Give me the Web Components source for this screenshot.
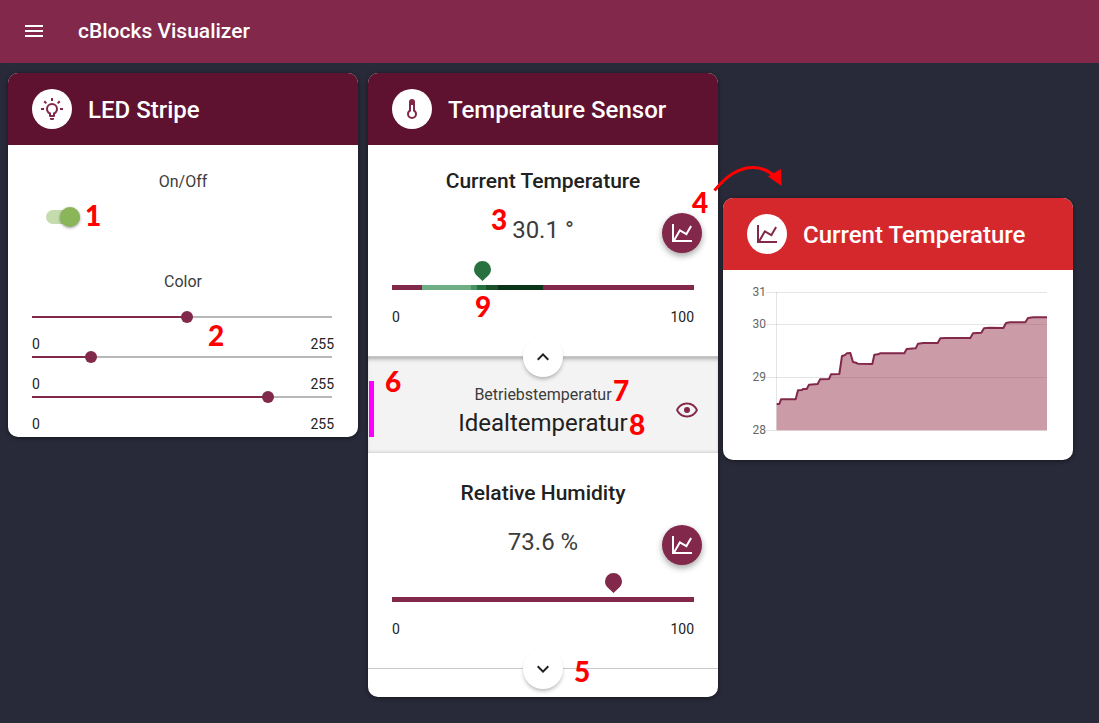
<!DOCTYPE html>
<html lang="en">
<head>
<meta charset="utf-8">
<meta name="viewport" content="width=device-width, initial-scale=1">
<title>cBlocks Visualizer</title>
<style>
  :root { --primary: #82284b; --primary-dark: #5e122f; --ink: #212121; --ink-soft: #3c3c3c; }
  body { margin: 0; min-height: 100vh; background: #292a39; color: var(--ink); font: 16px/24px Roboto, sans-serif; }
</style>
</head>
<body>
<cb-app>
  <cb-card slot="led" heading="LED Stripe" icon="bulb">
    <cb-led></cb-led>
    <cb-mark style="left:77px;top:128px">1</cb-mark>
    <cb-mark style="left:200px;top:248px">2</cb-mark>
  </cb-card>
  <cb-card slot="sensor" heading="Temperature Sensor" icon="thermometer">
    <cb-gauge heading="Current Temperature" value="30.1" unit="°" zones expanded></cb-gauge>
    <cb-state category="Betriebstemperatur" name="Idealtemperatur"></cb-state>
    <cb-gauge heading="Relative Humidity" value="73.6" unit="%"></cb-gauge>
    <cb-mark style="left:123px;top:132px">3</cb-mark>
    <cb-mark style="left:324px;top:115px">4</cb-mark>
    <cb-mark style="left:206px;top:584px">5</cb-mark>
    <cb-mark style="left:17px;top:294px">6</cb-mark>
    <cb-mark style="left:245px;top:303px">7</cb-mark>
    <cb-mark style="left:261px;top:337px">8</cb-mark>
    <cb-mark style="left:107px;top:219px">9</cb-mark>
    <cb-arrow style="left:345px;top:92px"></cb-arrow>
  </cb-card>
  <cb-card slot="chart" heading="Current Temperature" icon="chart" style="--head:#d5282c">
    <cb-chart></cb-chart>
  </cb-card>
</cb-app>

<script>
const ICONS = {
  menu: 'M3,6H21V8H3V6M3,11H21V13H3V11M3,16H21V18H3V16Z',
  bulb: 'M20,11H23V13H20V11M1,11H4V13H1V11M13,1V4H11V1H13M4.92,3.5L7.05,5.64L5.63,7.05L3.5,4.93L4.92,3.5M16.95,5.63L19.07,3.5L20.5,4.93L18.37,7.05L16.95,5.63M12,6A6,6 0 0,1 18,12C18,14.22 16.79,16.16 15,17.2V19A1,1 0 0,1 14,20H10A1,1 0 0,1 9,19V17.2C7.21,16.16 6,14.22 6,12A6,6 0 0,1 12,6M14,21V22A1,1 0 0,1 13,23H11A1,1 0 0,1 10,22V21H14M11,18H13V15.87C14.73,15.43 16,13.86 16,12A4,4 0 0,0 12,8A4,4 0 0,0 8,12C8,13.86 9.27,15.43 11,15.87V18Z',
  thermometer: 'M17,17A5,5 0 0,1 12,22A5,5 0 0,1 7,17C7,15.36 7.79,13.91 9,13V5A3,3 0 0,1 12,2A3,3 0 0,1 15,5V13C16.21,13.91 17,15.36 17,17M11,8V14.17C9.83,14.58 9,15.69 9,17A3,3 0 0,0 12,20A3,3 0 0,0 15,17C15,15.69 14.17,14.58 13,14.17V8H11Z',
  chart: 'M16,11.78L20.24,4.45L21.97,5.45L16.74,14.5L10.23,10.75L5.46,19H22V21H2V3H4V17.54L9.5,8L16,11.78Z',
  up: 'M7.41,15.41L12,10.83L16.59,15.41L18,14L12,8L6,14L7.41,15.41Z',
  down: 'M7.41,8.59L12,13.17L16.59,8.59L18,10L12,16L6,10L7.41,8.59Z',
  eye: 'M12,9A3,3 0 0,1 15,12A3,3 0 0,1 12,15A3,3 0 0,1 9,12A3,3 0 0,1 12,9M12,4.5C17,4.5 21.27,7.61 23,12C21.27,16.39 17,19.5 12,19.5C7,19.5 2.73,16.39 1,12C2.73,7.61 7,4.5 12,4.5M3.18,12C4.83,15.36 8.24,17.5 12,17.5C15.76,17.5 19.17,15.36 20.82,12C19.17,8.64 15.76,6.5 12,6.5C8.24,6.5 4.83,8.64 3.18,12Z'
};
const define = (name, render, init) => customElements.define(name, class extends HTMLElement {
  connectedCallback() {
    if (this.shadowRoot) return;
    const root = this.attachShadow({ mode: 'open' });
    root.innerHTML = '<style>*{box-sizing:border-box}button{font:inherit;border:0;padding:0;cursor:pointer}</style>' + render(this);
    if (init) init(root, this);
  }
});

define('cb-icon', el => `
  <style>:host{display:block;width:24px;height:24px}svg{display:block}</style>
  <svg width="24" height="24" viewBox="0 0 24 24" fill="currentColor" aria-hidden="true"><path d="${ICONS[el.getAttribute('name')]}"/></svg>`);

define('cb-app', () => `
  <style>
    :host{display:block}
    header{display:flex;align-items:center;gap:32px;padding:19px 22px 20px;background:var(--primary);color:#fff}
    header button{background:none;color:inherit}
    h1{margin:0;font-size:21px;line-height:24px;font-weight:500}
    main{display:flex;flex-wrap:wrap;align-items:flex-start;gap:10px;padding:10px 8px}
    .pair{display:flex;align-items:flex-start;gap:5px}
    .late{margin-top:125px}
  </style>
  <header><button aria-label="Menu"><cb-icon name="menu"></cb-icon></button><h1>cBlocks Visualizer</h1></header>
  <main>
    <slot name="led"></slot>
    <div class="pair"><slot name="sensor"></slot><div class="late"><slot name="chart"></slot></div></div>
  </main>`);

define('cb-card', el => `
  <style>
    :host{display:block;position:relative;width:350px;max-width:100%;background:#fff;border-radius:10px;box-shadow:0 1px 4px rgba(0,0,0,.5)}
    header{display:flex;align-items:center;gap:16px;padding:16px 24px;border-radius:10px 10px 0 0;background:var(--head,var(--primary-dark));color:#fff}
    .badge{display:grid;place-items:center;width:40px;height:40px;border-radius:50%;background:#fff;color:var(--primary)}
    h2{margin:0;padding-top:2px;font-size:24px;line-height:32px;font-weight:500}
  </style>
  <header><span class="badge"><cb-icon name="${el.getAttribute('icon')}"></cb-icon></span><h2>${el.getAttribute('heading')}</h2></header>
  <slot></slot>`);

define('cb-mark', () => `
  <style>:host{position:absolute;z-index:2;font:900 28px/28px Lato,sans-serif;color:#f00}</style><slot></slot>`);

define('cb-arrow', () => `
  <style>:host{position:absolute;z-index:2}svg{display:block}</style>
  <svg width="72" height="30" viewBox="0 0 72 30" aria-hidden="true">
    <path d="M1.5 25.5C14 10 28 2.5 40 2.5C49 2.5 56 6 62 11.5" fill="none" stroke="#f00" stroke-width="3"/>
    <path d="M55 11.5L68 4L68.7 21Z" fill="#f00"/>
  </svg>`);

define('cb-led', () => `
  <style>
    :host{display:block;padding:25px 24px 6px}
    .name{display:block;text-align:center;color:var(--ink-soft)}
    .switch{display:flex;appearance:none;width:34px;height:14px;margin:16px 14px 46px;border-radius:7px;background:#c5dcac;cursor:pointer}
    .switch::before{content:"";width:20px;height:20px;margin-top:-3px;border-radius:50%;background:#ccc;box-shadow:0 1px 3px rgba(0,0,0,.4)}
    .switch:checked::before{margin-left:14px;background:#8ab559}
    .sliders{padding-top:17px}
    .slider{display:block;appearance:none;width:calc(100% - 2px);height:12px;margin:0 0 14px;cursor:pointer;
      background:linear-gradient(to right,var(--primary) calc(6px + (100% - 12px)*var(--p)),#b8b8b8 0) center/100% 2px no-repeat}
    .slider::-webkit-slider-thumb{appearance:none;width:12px;height:12px;border-radius:50%;background:var(--primary)}
    .ends{display:flex;justify-content:space-between;font-size:14px;line-height:14px}
  </style>
  <label class="name" for="power">On/Off</label>
  <input class="switch" id="power" type="checkbox" checked>
  <span class="name" id="color">Color</span>
  <div class="sliders" role="group" aria-labelledby="color">
    ${[['Red', 132], ['Green', 47], ['Blue', 204]].map(([n, v]) => `
    <input class="slider" type="range" min="0" max="255" value="${v}" aria-label="${n}">
    <div class="ends"><span>0</span><span>255</span></div>`).join('')}
  </div>`,
  root => root.querySelectorAll('.slider').forEach(s => {
    const paint = () => s.style.setProperty('--p', s.value / 255);
    s.addEventListener('input', paint);
    paint();
  }));

define('cb-gauge', el => {
  const zones = el.hasAttribute('zones'), v = el.getAttribute('value'), h = el.getAttribute('heading');
  return `
  <style>
    :host{display:block;position:relative;padding:24px 24px 31px;border-bottom:1px solid #c8c8c8}
    :host(:not([zones])){margin:4px 0 28px}
    h3{margin:0 0 20px;text-align:center;font-size:21px;line-height:24px;font-weight:500}
    .row{display:grid;grid-template-columns:1fr auto 1fr}
    .value{grid-column:2;padding-top:1px;font-size:24px;line-height:32px;color:var(--ink-soft)}
    .fab{justify-self:end;margin-right:-8px;display:grid;place-items:center;width:40px;height:40px;border-radius:50%;background:var(--primary);color:#fff;box-shadow:0 3px 6px rgba(0,0,0,.35)}
    .pin{display:block;width:17px;height:20px;margin:8px 0 4px calc(${v}% - 9px);fill:${zones ? '#27713f' : 'var(--primary)'}}
    .bar{height:5px;background:${zones
      ? 'linear-gradient(to right,var(--primary) 10%,#6fad85 0 26%,#4a9263 0 28%,#27713f 0 31%,#19512a 0 35%,#0a3519 0 50%,var(--primary) 0)'
      : 'var(--primary)'}}
    .ends{display:flex;justify-content:space-between;margin-top:19px;font-size:14px;line-height:16px}
    .more{position:absolute;z-index:1;left:calc(50% - 20px);bottom:-21px;width:40px;height:40px;border-radius:50%;
      display:grid;place-items:center;background:#fff;color:var(--ink);box-shadow:0 3px 4px -1px rgba(0,0,0,.3)}
  </style>
  <h3>${h}</h3>
  <div class="row"><span class="value">${v} ${el.getAttribute('unit')}</span>
    <button class="fab" aria-label="Show chart of ${h}"><cb-icon name="chart"></cb-icon></button></div>
  <svg class="pin" viewBox="0 0 17 20" aria-hidden="true"><path d="M8.5 0A8.5 8.5 0 0 1 17 8.5C17 11.5 15.5 13.5 13.8 15L8.5 20L3.2 15C1.5 13.5 0 11.5 0 8.5A8.5 8.5 0 0 1 8.5 0Z"/></svg>
  <div class="bar" role="meter" aria-label="${h}" aria-valuemin="0" aria-valuemax="100" aria-valuenow="${v}"></div>
  <div class="ends"><span>0</span><span>100</span></div>
  <button class="more" aria-label="Toggle details"><cb-icon name="${el.hasAttribute('expanded') ? 'up' : 'down'}"></cb-icon></button>`;
});

define('cb-state', el => `
  <style>
    :host{display:grid;grid-template-columns:1fr auto 1fr;align-items:center;padding:24px 1px 14px;background:#f3f3f3;
      box-shadow:inset 0 4px 4px -2px rgba(0,0,0,.3),inset 0 -3px 3px -2px rgba(0,0,0,.15)}
    .tone{align-self:start;width:5px;height:56px;background:#f0f}
    .text{padding-top:2px;text-align:center}
    .category{display:block;color:var(--ink-soft)}
    .name{display:block;font-size:24px;line-height:32px}
    button{justify-self:end;margin-right:18px;background:none;color:var(--primary)}
  </style>
  <span class="tone"></span>
  <div class="text"><span class="category">${el.getAttribute('category')}</span><span class="name">${el.getAttribute('name')}</span></div>
  <button aria-label="Show range"><cb-icon name="eye"></cb-icon></button>`);

define('cb-chart', () => {
  const line = '170,402 178,402 183,388 227,388 234,361 246,360 249,357 260,357 267,344 293,342 300,328 327,327 333,313 358,312 366,258 374,256 381,250 391,249 399,276 408,278 413,281 457,282 463,254 474,253 480,250 553,250 560,237 587,235 594,221 610,219 653,219 661,205 678,204 751,204 759,190 784,188 792,175 808,173 850,174 858,159 870,157 916,157 924,144 940,142 981,142';
  const ticks = [[31, 6], [30, 38], [29, 91], [28, 144]];
  return `
  <style>
    :host{display:block;padding:16px 24px 24px}
    svg{display:block;width:100%;height:auto}
    text{font-size:12px;fill:#666;text-anchor:end}
  </style>
  <svg viewBox="0 0 302 150" role="img" aria-label="Temperature history">
    <g stroke="#000" stroke-opacity=".1">${ticks.map(t => `<path d="M19 ${t[1]}.5H300"/>`).join('')}<path d="M29.5 6V144"/></g>
    <g transform="translate(-27 -16) scale(.33333)">
      <polygon points="170,481 ${line} 981,481" fill="#973951" fill-opacity=".5"/>
      <polyline points="${line}" fill="none" stroke="#82284b" stroke-width="6" stroke-linejoin="round"/>
    </g>
    ${ticks.map(t => `<text x="19" y="${t[1] + 4}">${t[0]}</text>`).join('')}
  </svg>`;
});
</script>
</body>
</html>
